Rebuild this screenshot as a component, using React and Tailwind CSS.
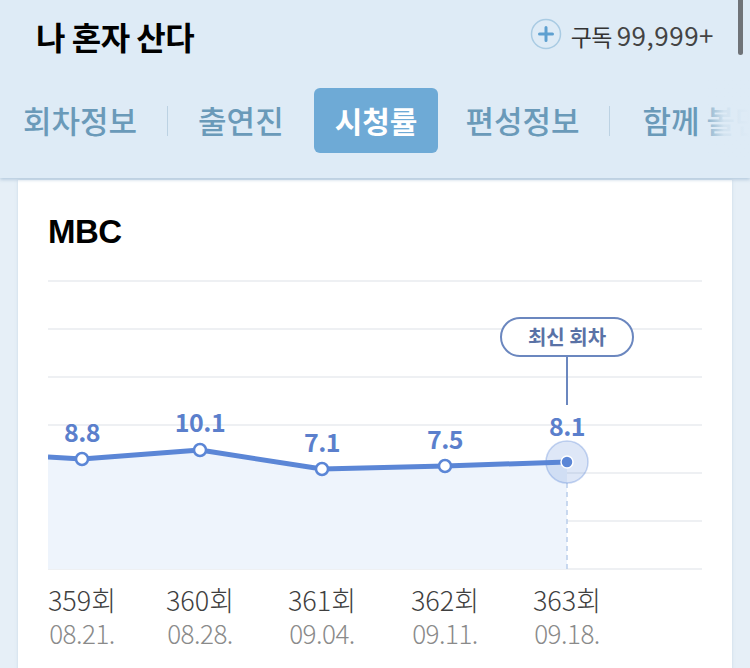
import React from 'react';

const points = [
  { x: 34, y: 189, value: '8.8', ep: '359회', date: '08.21.' },
  { x: 152, y: 180, value: '10.1', ep: '360회', date: '08.28.' },
  { x: 274, y: 199, value: '7.1', ep: '361회', date: '09.04.' },
  { x: 397, y: 196, value: '7.5', ep: '362회', date: '09.11.' },
  { x: 519, y: 192, value: '8.1', ep: '363회', date: '09.18.' },
];

const gridYs = [11, 59, 107, 155, 203, 251, 299];

function PlusCircle() {
  return (
    <svg width="32" height="32" viewBox="0 0 32 32">
      <circle cx="16" cy="16" r="14.5" fill="none" stroke="#a9cbe3" strokeWidth="1.5" />
      <path d="M16 9.5v13M9.5 16h13" stroke="#5ea0d0" strokeWidth="3" strokeLinecap="round" />
    </svg>
  );
}

function Chart() {
  const linePts = `0,187 ${points.map((p) => `${p.x},${p.y}`).join(' ')}`;
  const last = points[points.length - 1];
  return (
    <div className="relative w-[654px] h-[300px]">
      <svg width="654" height="300" viewBox="0 0 654 300" className="block">
        {gridYs.map((y) => (
          <line key={y} x1="0" x2="654" y1={y} y2={y} stroke="#eef0f3" strokeWidth="2" />
        ))}
        <polygon points={`${linePts} ${last.x},299 0,299`} fill="#eef4fc" />
        <line x1={last.x} x2={last.x} y1="213" y2="299" stroke="#b9cdea" strokeWidth="1.5" strokeDasharray="5 4" />
        <line x1={last.x} x2={last.x} y1="87" y2="135" stroke="#6b87bf" strokeWidth="2" />
        <polyline points={linePts} fill="none" stroke="#5b86d6" strokeWidth="5" strokeLinejoin="round" />
        {points.slice(0, -1).map((p) => (
          <circle key={p.x} cx={p.x} cy={p.y} r="6" fill="#fff" stroke="#5b86d6" strokeWidth="2.5" />
        ))}
        <circle cx={last.x} cy={last.y} r="21" fill="rgba(91,134,214,0.2)" stroke="rgba(91,134,214,0.35)" strokeWidth="1.5" />
        <circle cx={last.x} cy={last.y} r="6" fill="#5b86d6" stroke="#fff" strokeWidth="1.5" />
        {points.map((p, i) => (
          <text
            key={p.value}
            x={p.x}
            y={[172, 162, 182, 179, 166][i]}
            textAnchor="middle"
            fill="#5b7fcc"
            fontSize="25"
            fontWeight="700"
            letterSpacing="-0.5"
            fontFamily="'Noto Sans CJK KR', sans-serif"
          >
            {p.value}
          </text>
        ))}
      </svg>
      <div className="absolute left-[452px] top-[47px] w-[134px] h-[40px] rounded-full border-2 border-[#6b87bf] bg-white flex items-center justify-center text-[20px] font-bold text-[#5a72a6] leading-none">
        최신 회차
      </div>
    </div>
  );
}

function AxisLabels() {
  return (
    <div className="relative w-[654px] h-[80px] overflow-hidden">
      {points.map((p) => (
        <div
          key={p.ep}
          className="absolute top-[14px] -translate-x-1/2 flex flex-col items-center"
          style={{ left: p.x }}
        >
          <span className="text-[27px] leading-[32px] font-light text-[#3f3f3f]">{p.ep}</span>
          <span className="text-[26px] leading-[34px] font-light text-[#8a8a8a] tracking-[-0.5px]">{p.date}</span>
        </div>
      ))}
    </div>
  );
}

export default function App() {
  return (
    <div className="w-[750px] h-[668px] overflow-hidden bg-[#e6eff7] font-['Noto_Sans_CJK_KR',sans-serif] relative">
      <div className="relative h-[178px] bg-[#deebf6] shadow-[0_2px_3px_rgba(150,180,205,0.55)] z-10 overflow-hidden">
        <div className="h-[72px] flex items-center justify-between pl-[36px] pr-[36px]">
          <h1 className="text-[32px] font-bold text-black tracking-[-0.5px]">나 혼자 산다</h1>
          <div className="flex items-center gap-[9px] mt-[-4px]">
            <PlusCircle />
            <span className="text-[23px] text-[#333] tracking-[-0.5px]">
              구독 <span className="text-[26px] text-[#444] tracking-[0.5px]">99,999+</span>
            </span>
          </div>
        </div>
        <div className="mt-[16px] h-[65px] flex items-center pl-[23px] whitespace-nowrap text-[31px] font-medium text-[#6a9ab9]">
          <span className="shrink-0">회차정보</span>
          <span className="shrink-0 ml-[30px] w-px h-[30px] bg-[#bcd2e3]" />
          <span className="shrink-0 ml-[30px]">출연진</span>
          <span className="shrink-0 ml-[30px] h-[65px] px-[21px] rounded-[6px] bg-[#6eaad6] text-white text-[30px] font-bold flex items-center">시청률</span>
          <span className="shrink-0 ml-[27px]">편성정보</span>
          <span className="shrink-0 ml-[29px] w-px h-[30px] bg-[#bcd2e3]" />
          <span className="shrink-0 ml-[33px]">함께 볼만한 프로그램</span>
        </div>
        <div className="absolute right-0 top-[80px] w-[52px] h-[80px] bg-gradient-to-r from-[#deebf6]/0 via-[#deebf6]/90 to-[#deebf6]" />
        <div className="absolute left-[738px] top-0 w-[5px] h-[55px] rounded-b-full bg-[#6f7378]" />
      </div>
      <div className="px-[18px] pt-[2px]">
        <div className="bg-white px-[30px] pt-[32px] h-[500px] shadow-[0_0_3px_rgba(160,185,205,0.4)]">
          <div className="text-[33px] leading-[40px] font-bold text-black font-['Liberation_Sans',sans-serif] tracking-[-0.5px]">MBC</div>
          <div className="mt-[18px]">
            <Chart />
            <AxisLabels />
          </div>
        </div>
      </div>
    </div>
  );
}
